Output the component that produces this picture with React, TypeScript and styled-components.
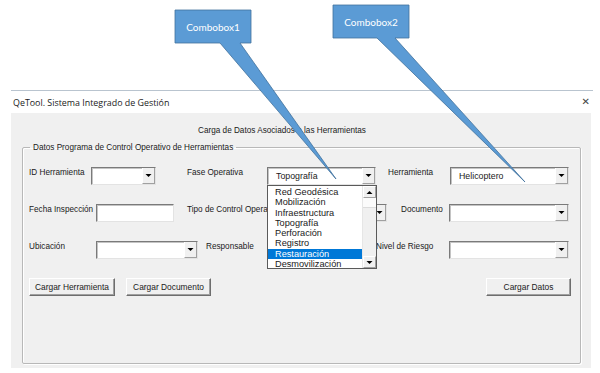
import React from "react";
import styled, { createGlobalStyle, css } from "styled-components";

const GlobalStyle = createGlobalStyle`
  html, body {
    margin: 0;
    padding: 0;
    background: #ffffff;
  }
  body {
    width: 600px;
    height: 373px;
    overflow: hidden;
  }
`;

const uiFont = `"Liberation Sans", Arial, sans-serif`;

const Page = styled.div`
  position: relative;
  width: 600px;
  height: 373px;
  padding-top: 90px;
  box-sizing: border-box;
`;

const Window = styled.div`
  margin-left: 11px;
  width: 582px;
  border-top: 1px solid #b9c4cf;
`;

const TitleBar = styled.div`
  display: flex;
  align-items: center;
  justify-content: space-between;
  height: 22px;
  padding: 0 3px 0 2px;
  font-family: "Open Sans", "Noto Sans", sans-serif;
  font-size: 8.9px;
  color: #1b1b1b;
`;

const CloseGlyph = styled.span`
  font-family: "DejaVu Sans", sans-serif;
  font-size: 10px;
  color: #444;
  line-height: 1;
`;

const Client = styled.div`
  width: 580px;
  height: 255px;
  background: #f0f0f0;
  display: flex;
  flex-direction: column;
  padding-top: 12px;
  box-sizing: border-box;
  font-family: ${uiFont};
  font-size: 8.2px;
  color: #1a1a1a;
`;

const Heading = styled.div`
  line-height: 11px;
  padding-left: 187px;
`;

const GroupBox = styled.fieldset`
  margin: 6px 0 0 11px;
  width: 559px;
  height: 222px;
  box-sizing: border-box;
  padding: 14px 9px 0 6px;
  border: 1px solid #b8b8b8;
  border-radius: 2px;
  box-shadow: inset 1px 1px 0 #ffffff, 1px 1px 0 #ffffff;
  display: flex;
  flex-direction: column;
  gap: 19px;
`;

const Legend = styled.legend`
  margin-left: 1px;
  padding: 0 3px;
  line-height: 11px;
`;

const Row = styled.div`
  display: flex;
  align-items: flex-start;
  height: 18px;
`;

const Label = styled.div<{ $w: number; $ml?: number }>`
  width: ${(p) => p.$w}px;
  margin-left: ${(p) => p.$ml ?? 0}px;
  line-height: 12px;
  white-space: nowrap;
  flex-shrink: 0;
`;

const sunken = css`
  box-sizing: border-box;
  background: #ffffff;
  border: 1px solid;
  border-color: #7a7a7a #e3e3e3 #e3e3e3 #7a7a7a;
  box-shadow: inset 1px 1px 0 #c4c4c4;
`;

const ComboBox = styled.div<{ $w: number; $ml?: number }>`
  ${sunken}
  position: relative;
  width: ${(p) => p.$w}px;
  margin-left: ${(p) => p.$ml ?? 0}px;
  height: 18px;
  flex-shrink: 0;
  display: flex;
  align-items: center;
`;

const TextBox = styled.div<{ $w: number }>`
  ${sunken}
  width: ${(p) => p.$w}px;
  height: 18px;
  flex-shrink: 0;
`;

const ComboValue = styled.span`
  flex: 1;
  padding-left: 8px;
  font-size: 8.8px;
  white-space: nowrap;
  overflow: hidden;
`;

const ArrowButton = styled.div`
  box-sizing: border-box;
  width: 13px;
  height: 100%;
  background: #f0f0f0;
  border-left: 1px solid #ffffff;
  border-right: 1px solid #a0a0a0;
  border-bottom: 1px solid #a0a0a0;
  display: flex;
  align-items: center;
  justify-content: center;
`;

const Arrow = ({ up }: { up?: boolean }) => (
  <svg width="7" height="5" viewBox="0 0 7 5">
    <path d={up ? "M0.5 4 L3.5 1 L6.5 4 Z" : "M0.5 1 L3.5 4 L6.5 1 Z"} fill="#000" />
  </svg>
);

const DropList = styled.div`
  position: absolute;
  z-index: 5;
  top: 17px;
  left: -1px;
  width: 110px;
  height: 84px;
  box-sizing: border-box;
  background: #ffffff;
  border: 1px solid #5a5a5a;
  display: flex;
`;

const Items = styled.ul`
  flex: 1;
  margin: 0;
  padding: 1px 0 0;
  list-style: none;
`;

const Item = styled.li<{ $active?: boolean }>`
  height: 10.25px;
  line-height: 10.25px;
  padding-left: 7px;
  font-size: 9.2px;
  white-space: nowrap;
  ${(p) =>
    p.$active &&
    css`
      background: #0078d7;
      color: #ffffff;
    `}
`;

const ScrollBar = styled.div`
  width: 13px;
  display: flex;
  flex-direction: column;
  background: #f0f0f0;
  border-left: 1px solid #e6e6e6;
`;

const ScrollButton = styled.div`
  box-sizing: border-box;
  height: 12px;
  background: #f0f0f0;
  border: 1px solid;
  border-color: #ffffff #a0a0a0 #a0a0a0 #ffffff;
  display: flex;
  align-items: center;
  justify-content: center;
`;

const ScrollThumb = styled.div`
  height: 9px;
  background: #fbfbfb;
  border-bottom: 1px solid #dcdcdc;
`;

const ScrollTrack = styled.div`
  flex: 1;
`;

const Button = styled.button<{ $w: number; $ml?: number | "auto" }>`
  width: ${(p) => p.$w}px;
  height: 18px;
  margin: 0;
  margin-left: ${(p) => (p.$ml === "auto" ? "auto" : `${p.$ml ?? 0}px`)};
  padding: 0;
  box-sizing: border-box;
  background: #f0f0f0;
  border: 1px solid;
  border-color: #ffffff #6e6e6e #6e6e6e #ffffff;
  box-shadow: inset -1px -1px 0 #a0a0a0;
  font-family: ${uiFont};
  font-size: 8.4px;
  color: #1a1a1a;
`;

const CalloutLayer = styled.svg`
  position: absolute;
  top: 0;
  left: 0;
  z-index: 10;
  pointer-events: none;
`;

const CalloutText = styled.text`
  font-family: Lato, "Open Sans", sans-serif;
  font-size: 10px;
  fill: #ffffff;
`;

const faseItems = [
  "Red Geodésica",
  "Mobilización",
  "Infraestructura",
  "Topografía",
  "Perforación",
  "Registro",
  "Restauración",
  "Desmovilización",
];

const Combo = ({ w, ml, value, children }: { w: number; ml?: number; value?: string; children?: React.ReactNode }) => (
  <ComboBox $w={w} $ml={ml}>
    <ComboValue>{value}</ComboValue>
    <ArrowButton>
      <Arrow />
    </ArrowButton>
    {children}
  </ComboBox>
);

const callouts = [
  { label: "Combobox1", points: "175,10 251,10 251,43 240,43 336,179 220,43 175,43", tx: 213, ty: 30.5 },
  { label: "Combobox2", points: "333,5 409,5 409,38 395,38 525,182 377,38 333,38", tx: 371, ty: 25.5 },
];

export default function App() {
  return (
    <>
      <GlobalStyle />
      <Page>
        <Window>
          <TitleBar>
            <span>QeTool. Sistema Integrado de Gestión</span>
            <CloseGlyph>✕</CloseGlyph>
          </TitleBar>
          <Client>
            <Heading>Carga de Datos Asociados a las Herramientas</Heading>
            <GroupBox>
              <Legend>Datos Programa de Control Operativo de Herramientas</Legend>
              <Row>
                <Label $w={62}>ID Herramienta</Label>
                <Combo w={65} />
                <Label $w={80} $ml={31}>Fase Operativa</Label>
                <Combo w={109} value="Topografía">
                  <DropList>
                    <Items>
                      {faseItems.map((it) => (
                        <Item key={it} $active={it === "Restauración"}>
                          {it}
                        </Item>
                      ))}
                    </Items>
                    <ScrollBar>
                      <ScrollButton>
                        <Arrow up />
                      </ScrollButton>
                      <ScrollThumb />
                      <ScrollTrack />
                      <ScrollButton>
                        <Arrow />
                      </ScrollButton>
                    </ScrollBar>
                  </DropList>
                </Combo>
                <Label $w={62} $ml={12}>Herramienta</Label>
                <Combo w={119} value="Helicoptero" />
              </Row>
              <Row>
                <Label $w={67}>Fecha Inspección</Label>
                <TextBox $w={78} />
                <Label $w={80} $ml={13}>Tipo de Control Operativo</Label>
                <Combo w={88} ml={32} />
                <Label $w={48} $ml={14}>Documento</Label>
                <Combo w={120} />
              </Row>
              <Row>
                <Label $w={67}>Ubicación</Label>
                <Combo w={102} />
                <Label $w={61} $ml={8}>Responsable</Label>
                <Combo w={98} ml={2} />
                <Label $w={73} $ml={9}>Nivel de Riesgo</Label>
                <Combo w={120} />
              </Row>
              <Row>
                <Button $w={86}>Cargar Herramienta</Button>
                <Button $w={85} $ml={11}>Cargar Documento</Button>
                <Button $w={85} $ml="auto">Cargar Datos</Button>
              </Row>
            </GroupBox>
          </Client>
        </Window>
        <CalloutLayer width="600" height="373" viewBox="0 0 600 373">
          {callouts.map((c) => (
            <g key={c.label}>
              <polygon points={c.points} fill="#5b9bd5" stroke="#41719c" strokeWidth="0.8" strokeLinejoin="miter" />
              <CalloutText x={c.tx} y={c.ty} textAnchor="middle">
                {c.label}
              </CalloutText>
            </g>
          ))}
        </CalloutLayer>
      </Page>
    </>
  );
}
